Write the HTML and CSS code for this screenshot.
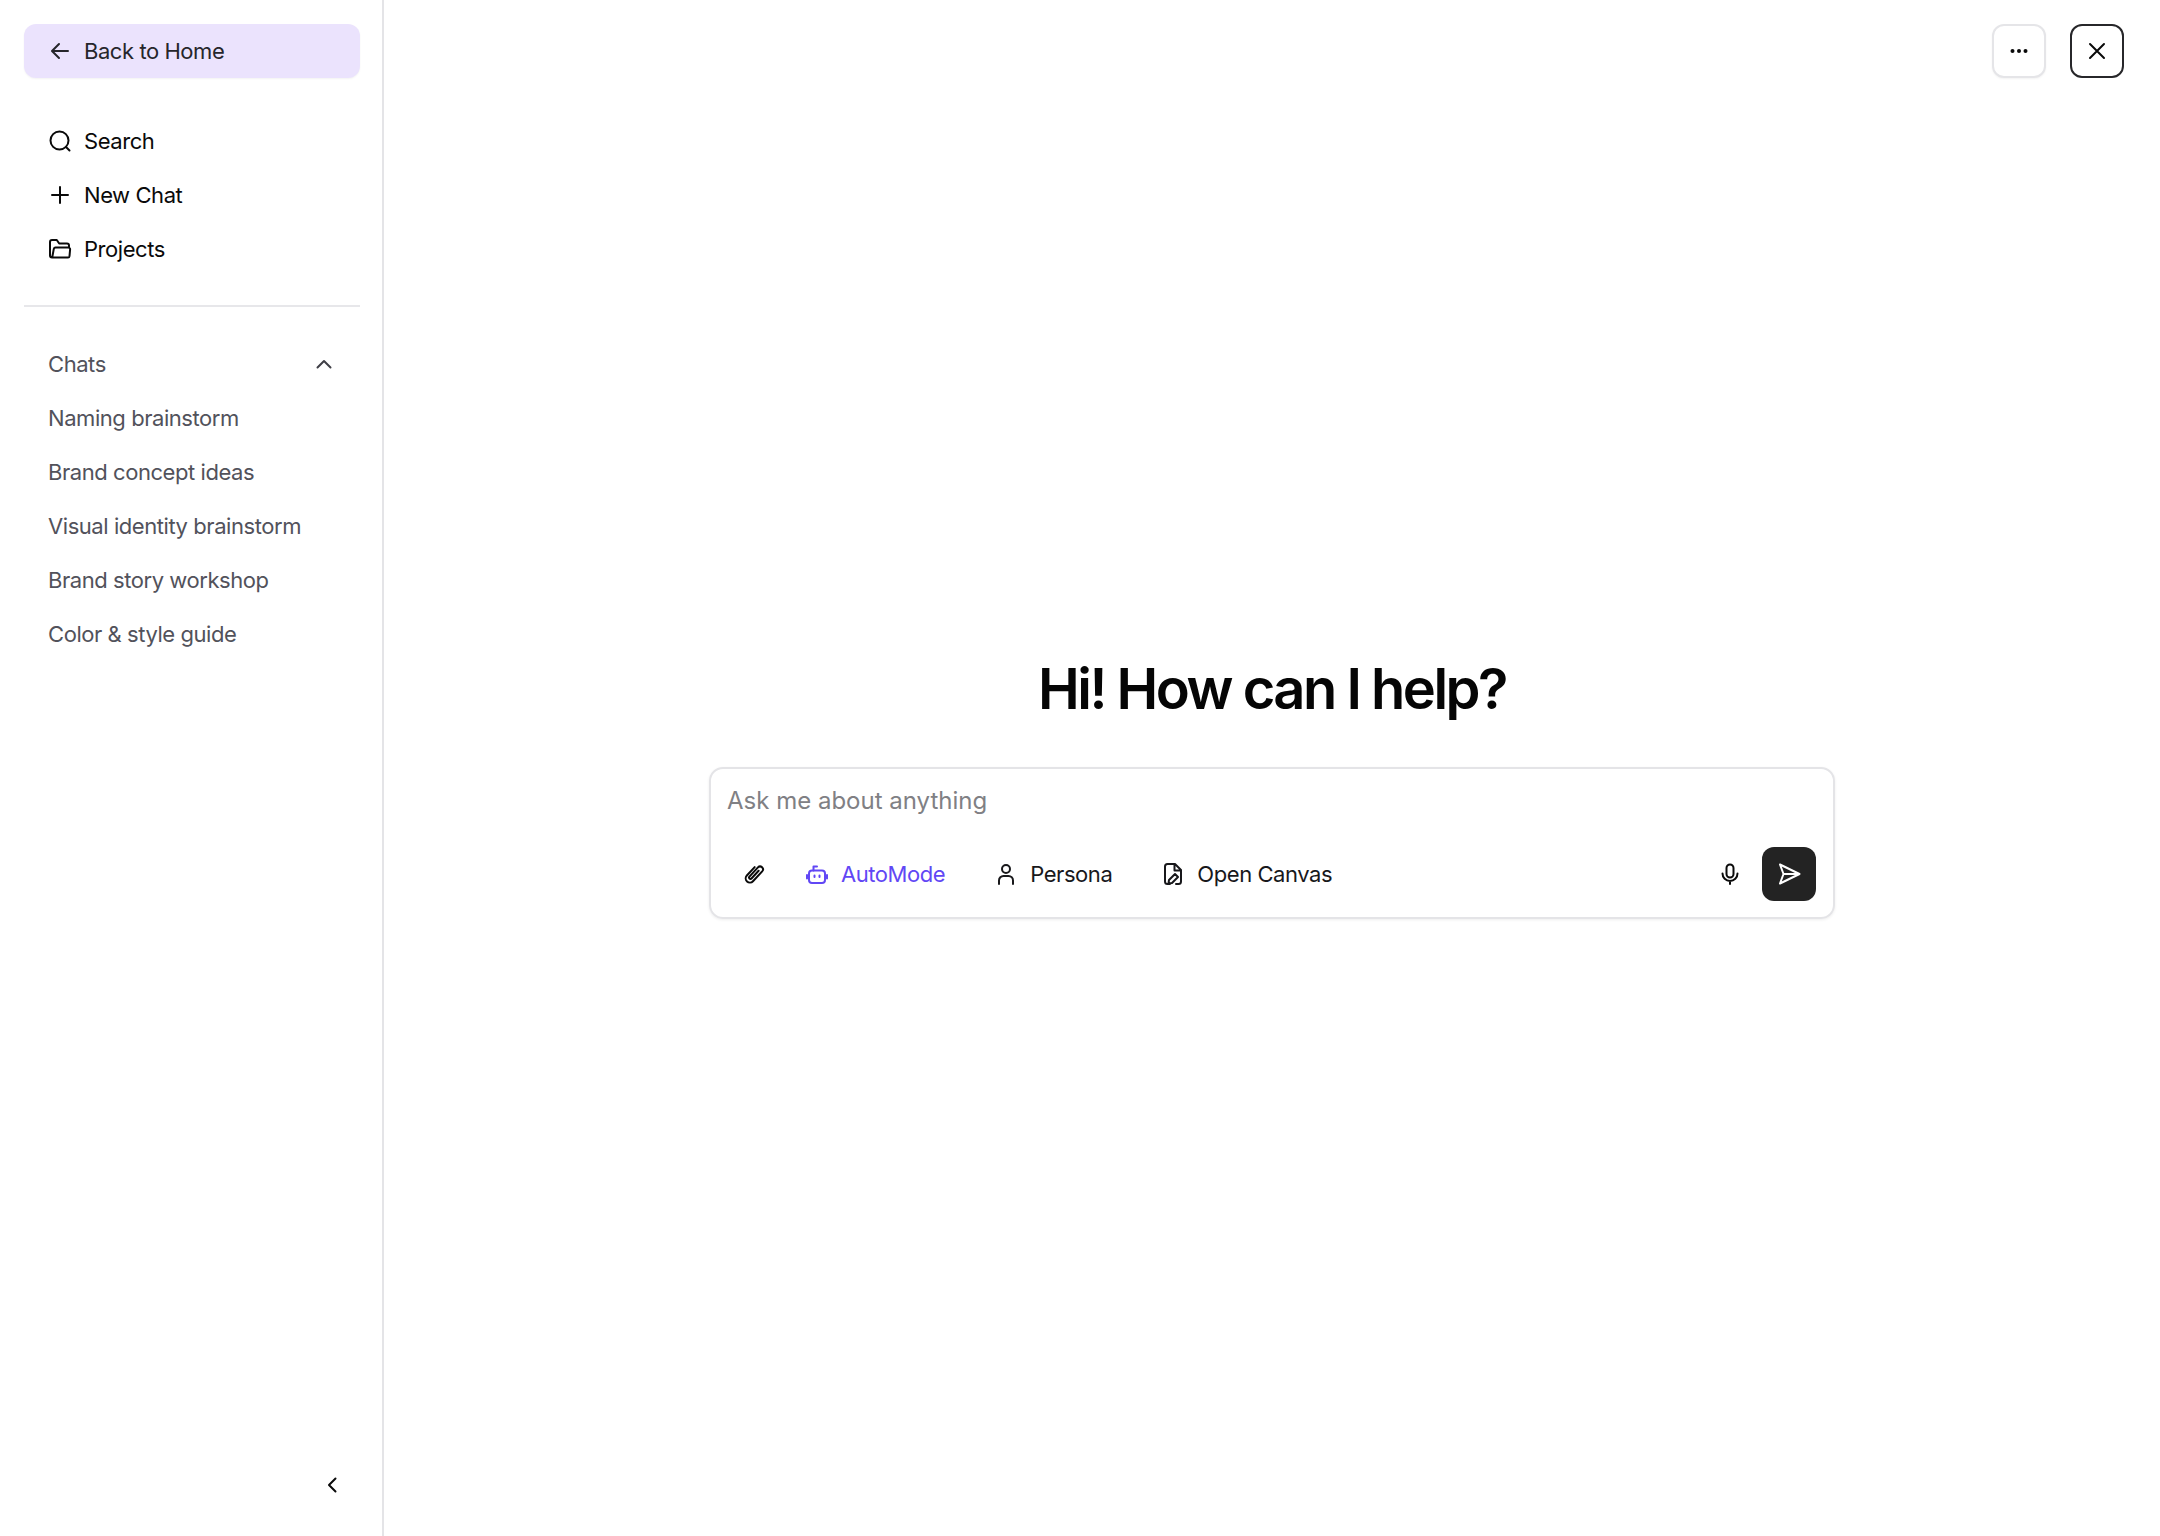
FILE: index.html
```html
<!DOCTYPE html>
<html lang="en">
<head>
<meta charset="utf-8">
<title>Chat</title>
<link rel="stylesheet" href="styles.css">
</head>
<body>
<div class="app">
  <aside class="sidebar">
    <a class="back">
      <svg class="ic" viewBox="0 0 24 24"><path d="M20 12H4.500M11 5l-7 7 7 7"/></svg>
      <span>Back to Home</span>
    </a>
    <nav class="nav">
      <a class="row"><svg class="ic" viewBox="0 0 24 24"><circle cx="11.500" cy="11.500" r="9"/><path d="M18 18l3.500 3.500"/></svg><span>Search</span></a>
      <a class="row"><svg class="ic" viewBox="0 0 24 24"><path d="M12 4v16M4 12h16"/></svg><span>New Chat</span></a>
      <a class="row"><svg class="ic" viewBox="0 0 24 24"><path d="M5 20.500H4A2 2 0 0 1 2 18.500V5a2 2 0 0 1 2-2h4.800l2.400 3.500H19a2 2 0 0 1 2 2v2M5 20.500h15a1.500 1.500 0 0 0 1.500-1.300l.6-6.700a1.800 1.800 0 0 0-1.800-2H7.500a1.800 1.800 0 0 0-1.700 1.400L4.300 20"/></svg><span>Projects</span></a>
    </nav>
    <hr class="divider">
    <section class="chats">
      <div class="row chats-head"><span>Chats</span><svg class="ic chev" viewBox="0 0 24 24"><path d="M5.500 15.500L12 9l6.500 6.500"/></svg></div>
      <a class="row">Naming brainstorm</a>
      <a class="row">Brand concept ideas</a>
      <a class="row">Visual identity brainstorm</a>
      <a class="row">Brand story workshop</a>
      <a class="row">Color &amp; style guide</a>
    </section>
    <div class="collapse"><svg class="ic" viewBox="0 0 24 24"><path d="M15.500 5.500L9 12l6.500 6.500"/></svg></div>
  </aside>
  <main class="main">
    <header class="top">
      <button class="square"><svg class="ic" viewBox="0 0 24 24"><circle class="dot" cx="5.500" cy="12" r="2"/><circle class="dot" cx="12" cy="12" r="2"/><circle class="dot" cx="18.500" cy="12" r="2"/></svg></button>
      <button class="square dark"><svg class="ic" viewBox="0 0 24 24"><path d="M5 5l14 14M19 5L5 19"/></svg></button>
    </header>
    <div class="center">
      <h1>Hi! How can I help?</h1>
      <div class="composer">
        <div class="placeholder">Ask me about anything</div>
        <div class="tools">
          <svg class="ic clip" viewBox="0 0 24 24"><path transform="rotate(43 12 12)" d="M7.800 6.500v11.500a4.200 4.200 0 0 0 8.400 0V4.500a2.900 2.900 0 0 0-5.800 0v12.500a1.400 1.400 0 0 0 2.800 0V6.500"/></svg>
          <span class="tool auto"><svg class="ic" viewBox="0 0 24 24"><rect x="4" y="8.500" width="16" height="12.500" rx="3"/><path d="M8.500 8.500V4.500h3.500M2 13v3.500M22 13v3.500M9.500 13.500v1.500M14.500 13.500v1.500"/></svg>AutoMode</span>
          <span class="tool"><svg class="ic" viewBox="0 0 24 24"><circle cx="12" cy="7" r="4"/><path d="M5 22v-3.500A4.500 4.500 0 0 1 9.500 14h5a4.500 4.500 0 0 1 4.500 4.500V22"/></svg>Persona</span>
          <span class="tool"><svg class="ic" viewBox="0 0 24 24"><path d="M9 22H6.500A2.500 2.500 0 0 1 4 19.500v-15A2.500 2.500 0 0 1 6.500 2H14l6 6v11.500a2.500 2.500 0 0 1-2.500 2.500H15M13.500 2.500V8.500H20M7.500 21.500l.5-3.500 6-6 3 3-6 6z"/></svg>Open Canvas</span>
          <span class="spacer"></span>
          <svg class="ic mic" viewBox="0 0 24 24"><rect x="8.500" y="2.500" width="7" height="13" rx="3.500"/><path d="M4.500 11.500a7.500 7.500 0 0 0 15 0M12 19v3"/></svg>
          <button class="send"><svg class="ic" viewBox="0 0 24 24"><path d="M3 2.500L22.500 12 3 21.500 6.500 12zM6.500 12H22.500"/></svg></button>
        </div>
      </div>
    </div>
  </main>
</div>
</body>
</html>
```
FILE: styles.css
```css
* { box-sizing: border-box; }
html, body { margin: 0; height: 100%; }
body {
  font-family: Inter, "Liberation Sans", sans-serif;
  background: #fff;
  color: #0a0a0a;
  font-size: 22px;
  letter-spacing: -0.440px;
}
.app { display: flex; height: 1536px; }
.ic {
  width: 24px;
  height: 24px;
  flex: none;
  fill: none;
  stroke: currentColor;
  stroke-width: 2;
  stroke-linecap: round;
  stroke-linejoin: round;
}
.sidebar {
  width: 384px;
  flex: none;
  border-right: 2px solid #e4e4e7;
  padding: 24px 22px 24px 24px;
  display: flex;
  flex-direction: column;
}
.back {
  height: 54px;
  display: flex;
  align-items: center;
  gap: 12px;
  padding: 0 24px;
  background: #ebe3fd;
  border-radius: 12px;
  box-shadow: 0 1px 2px rgba(0,0,0,.05);
  color: #26262b;
}
.nav { margin-top: 36px; display: flex; flex-direction: column; }
.row {
  height: 54px;
  padding: 0 24px;
  display: flex;
  align-items: center;
  gap: 12px;
}
.divider {
  border: 0;
  height: 2px;
  background: #e7e7ea;
  margin: 29px 0 30px;
}
.chats { display: flex; flex-direction: column; color: #52525b; }
.chats-head { justify-content: space-between; padding-right: 24px; }
.chev { color: #3f3f46; }
.collapse {
  margin-top: auto;
  display: flex;
  justify-content: flex-end;
  padding: 0 16px 15px 0;
  color: #0a0a0a;
}
.main { flex: 1; position: relative; display: flex; flex-direction: column; align-items: center; justify-content: center; }
.top { position: absolute; top: 24px; right: 36px; display: flex; gap: 24px; }
.square {
  width: 54px;
  height: 54px;
  border-radius: 12px;
  border: 2px solid #e5e5e8;
  background: #fff;
  display: flex;
  align-items: center;
  justify-content: center;
  padding: 0;
  color: #0a0a0a;
  box-shadow: 0 1px 2px rgba(0,0,0,.05);
}
.square.dark { border-color: #27272a; box-shadow: none; }
.dot { fill: currentColor; stroke: none; }
.center { width: 100%; display: flex; flex-direction: column; align-items: center; margin-top: 37px; }
h1 {
  margin: 0 0 44px;
  font-size: 56px;
  line-height: 68px;
  font-weight: 600;
  letter-spacing: -2.500px;
  color: #050505;
}
.composer {
  width: 1126px;
  height: 152px;
  border: 2px solid #e4e4e7;
  border-radius: 14px;
  box-shadow: 0 1px 3px rgba(0,0,0,.07);
  padding: 16px 17px 16px 16px;
  display: flex;
  flex-direction: column;
  justify-content: space-between;
}
.placeholder { font-size: 24px; line-height: 32px; color: #808084; letter-spacing: 0; }
.tools { display: flex; align-items: center; height: 54px; padding-left: 15px; }
.tool { display: flex; align-items: center; gap: 12px; color: #18181b; }
.clip { margin-right: 39px; }
.auto { color: #6147f5; }
.tool + .tool { margin-left: 49px; }
.spacer { flex: 1; }
.mic { margin-right: 20px; }
.send {
  width: 54px;
  height: 54px;
  border: 0;
  padding: 0;
  border-radius: 12px;
  background: #232323;
  color: #fff;
  display: flex;
  align-items: center;
  justify-content: center;
}
```
